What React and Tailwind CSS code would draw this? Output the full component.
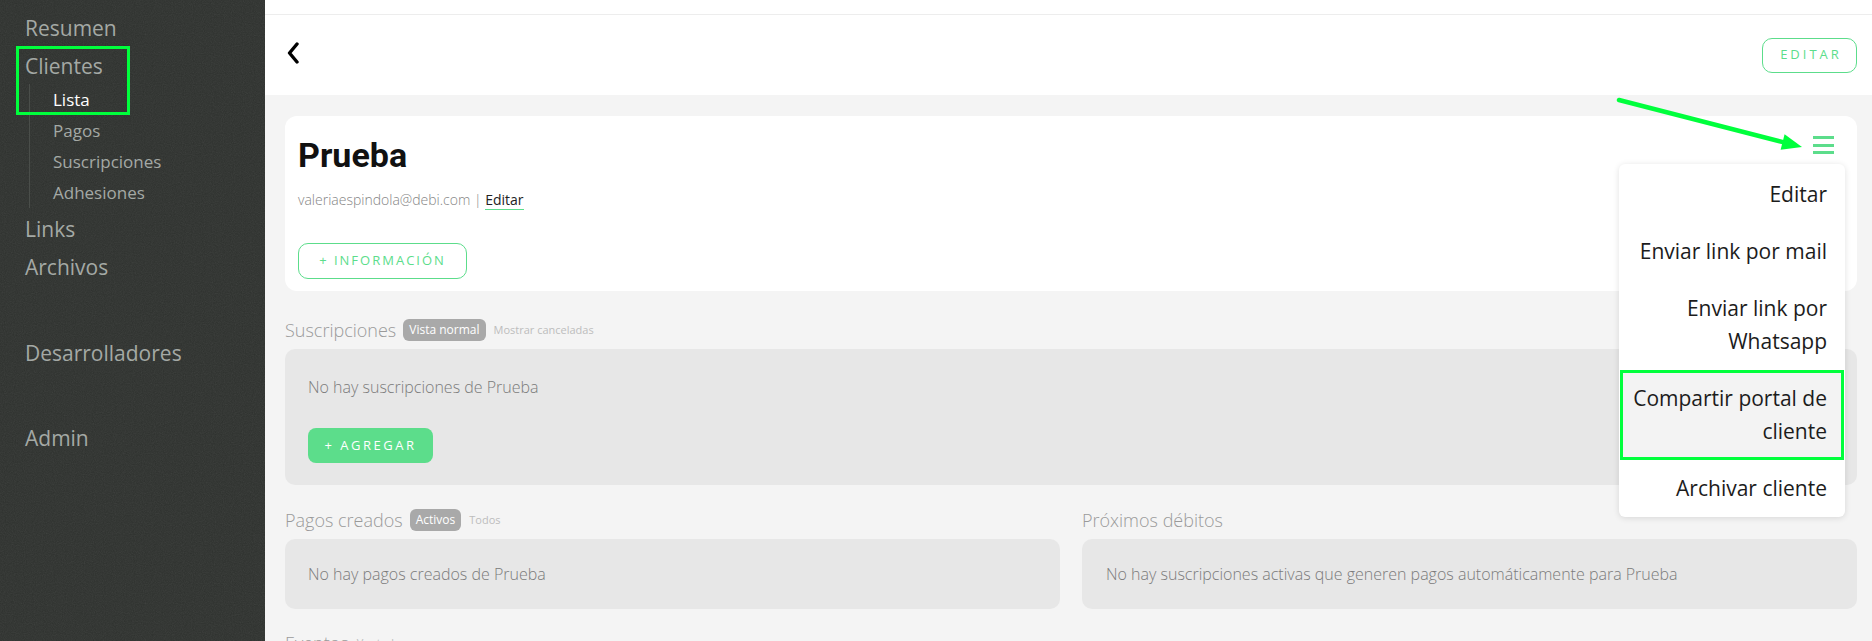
import React from "react";

const GREEN = "#5cdd8b";

function SideItem({ children, className = "" }) {
  return (
    <div className={`text-[21px] leading-[38px] text-[#a4a9a5] ${className}`}>{children}</div>
  );
}

function SubItem({ children, active }) {
  return (
    <div className={`text-[17px] leading-[31px] ${active ? "text-white" : "text-[#a4a9a5]"}`}>{children}</div>
  );
}

function SectionHeading({ title, badge, other }) {
  return (
    <div className="flex items-center h-[24px] mb-[7px]">
      <span className="text-[18px] font-light text-[#9a9a9a] leading-[24px]">{title}</span>
      {badge && (
        <span className="ml-[7px] h-[22px] px-[6px] rounded-[6px] bg-[#a9a9a9] text-white text-[12px] leading-[22px]">
          {badge}
        </span>
      )}
      {other && <span className="ml-[8px] text-[11px] text-[#bdbdbd] leading-[22px]">{other}</span>}
    </div>
  );
}

function MenuItem({ children, highlight }) {
  if (highlight) {
    return (
      <div className="mx-px border-[3px] border-[#00ff3c] bg-[#f3f3f3] py-[9px] pr-[14px] pl-0 text-right text-[21px] leading-[33px] text-[#1c1c1c] whitespace-nowrap">
        {children}
      </div>
    );
  }
  return (
    <div className="py-[12px] pr-[18px] pl-[16px] text-right text-[21px] leading-[33px] text-[#1c1c1c] whitespace-nowrap">
      {children}
    </div>
  );
}

export default function App() {
  return (
    <div
      className="relative flex w-full h-[641px] overflow-hidden"
      style={{ fontFamily: "'Open Sans', 'Noto Sans', sans-serif" }}
    >
      {/* Sidebar */}
      <aside className="relative w-[265px] shrink-0 bg-[#2e312e] overflow-hidden">
        <svg className="absolute inset-0 w-full h-full" aria-hidden="true">
          <filter id="noise">
            <feTurbulence type="fractalNoise" baseFrequency="0.9" numOctaves="2" stitchTiles="stitch" />
            <feColorMatrix type="saturate" values="0" />
          </filter>
          <rect width="100%" height="100%" filter="url(#noise)" opacity="0.1" />
        </svg>
        <div className="relative pl-[25px] pt-[9px]">
          <SideItem>Resumen</SideItem>
          <SideItem>Clientes</SideItem>
          <div className="ml-[4px] border-l border-[#4a4e4a] pl-[23px] -mt-px mb-[2px]">
            <SubItem active>Lista</SubItem>
            <SubItem>Pagos</SubItem>
            <SubItem>Suscripciones</SubItem>
            <SubItem>Adhesiones</SubItem>
          </div>
          <SideItem>Links</SideItem>
          <SideItem>Archivos</SideItem>
          <SideItem className="mt-[48px]">Desarrolladores</SideItem>
          <SideItem className="mt-[47px]">Admin</SideItem>
        </div>
        <div className="absolute left-[16px] top-[46px] w-[114px] h-[69px] border-[3px] border-[#00ff3c]" />
      </aside>

      {/* Main */}
      <main className="relative flex-1 bg-[#f4f4f4] flex flex-col">
        <header className="bg-white">
          <div className="h-[14px]" />
          <div className="h-px bg-[#ededed]" />
          <div className="h-[80px] flex items-center justify-between pl-[21px] pr-[15px]">
            <svg width="14" height="22" viewBox="0 0 14 22" className="-mt-[4px]">
              <path d="M11 2 L3.5 11 L11 20" fill="none" stroke="#000" strokeWidth="3.4" strokeLinecap="round" strokeLinejoin="round" />
            </svg>
            <button
              className="w-[95px] h-[35px] rounded-[10px] border text-[13px] tracking-[3px] pl-[3px]"
              style={{ borderColor: GREEN, color: GREEN }}
            >
              EDITAR
            </button>
          </div>
        </header>

        <div className="pl-[20px] pr-[15px] pt-[21px]">
          {/* Client card */}
          <div className="relative bg-white rounded-[12px] pl-[13px] pt-[19px] pb-[12px] h-[175px]">
            <h1
              className="text-[34px] leading-[40px] font-bold text-[#111]"
              style={{ fontFamily: "Roboto, 'Open Sans', sans-serif" }}
            >
              Prueba
            </h1>
            <div className="mt-[15px] text-[14px] leading-[20px] font-light text-[#858585]">
              valeriaespindola@debi.com |{" "}
              <span className="text-[#222] font-normal border-b" style={{ borderColor: GREEN }}>
                Editar
              </span>
            </div>
            <button
              className="mt-[33px] w-[169px] h-[36px] rounded-[10px] border text-[13px] tracking-[2px]"
              style={{ borderColor: GREEN, color: GREEN }}
            >
              + INFORMACIÓN
            </button>

            {/* hamburger */}
            <div className="absolute right-[23px] top-[20px] w-[21px] h-[18px] flex flex-col justify-between">
              <div className="h-[3px] w-full" style={{ backgroundColor: GREEN }} />
              <div className="h-[3px] w-full" style={{ backgroundColor: GREEN }} />
              <div className="h-[3px] w-full" style={{ backgroundColor: GREEN }} />
            </div>

            {/* dropdown */}
            <div className="absolute z-10 right-[12px] top-[48px] w-[226px] bg-white rounded-[6px] pt-[2px] shadow-[0_1px_6px_rgba(0,0,0,0.12)]">
              <MenuItem>Editar</MenuItem>
              <MenuItem>Enviar link por mail</MenuItem>
              <MenuItem>
                Enviar link por
                <br />
                Whatsapp
              </MenuItem>
              <MenuItem highlight>
                Compartir portal de
                <br />
                cliente
              </MenuItem>
              <MenuItem>Archivar cliente</MenuItem>
            </div>
          </div>

          {/* Suscripciones */}
          <div className="mt-[27px]">
            <SectionHeading title="Suscripciones" badge="Vista normal" other="Mostrar canceladas" />
            <div className="bg-[#e7e7e7] rounded-[10px] pl-[23px] pt-[26px] pb-[22px] h-[136px]">
              <div className="text-[16px] leading-[24px] font-light text-[#7b7b7b]">
                No hay suscripciones de Prueba
              </div>
              <button
                className="mt-[29px] w-[125px] h-[35px] rounded-[8px] text-white text-[13px] tracking-[2.5px]"
                style={{ backgroundColor: GREEN }}
              >
                + AGREGAR
              </button>
            </div>
          </div>

          {/* Pagos / Próximos */}
          <div className="mt-[23px] grid grid-cols-2 gap-[22px]">
            <div>
              <SectionHeading title="Pagos creados" badge="Activos" other="Todos" />
              <div className="bg-[#e7e7e7] rounded-[10px] pl-[23px] pt-[23px] h-[70px]">
                <div className="text-[16px] leading-[24px] font-light text-[#7b7b7b]">
                  No hay pagos creados de Prueba
                </div>
              </div>
            </div>
            <div>
              <SectionHeading title="Próximos débitos" />
              <div className="bg-[#e7e7e7] rounded-[10px] pl-[24px] pt-[23px] h-[70px]">
                <div className="text-[16px] leading-[24px] font-light text-[#7b7b7b]">
                  No hay suscripciones activas que generen pagos automáticamente para Prueba
                </div>
              </div>
            </div>
          </div>

          {/* Eventos */}
          <div className="mt-[22px]">
            <SectionHeading title="Eventos" other="Ver todos" />
          </div>
        </div>
      </main>

      {/* annotation arrow */}
      <svg className="absolute left-[1600px] top-[85px] pointer-events-none" width="220" height="80" viewBox="1600 85 220 80">
        <line x1="1619" y1="100" x2="1784" y2="142.4" stroke="#00ff3c" strokeWidth="4.5" strokeLinecap="round" />
        <polygon points="1802,147 1780.6,149.7 1784.6,134.3" fill="#00ff3c" />
      </svg>
    </div>
  );
}
